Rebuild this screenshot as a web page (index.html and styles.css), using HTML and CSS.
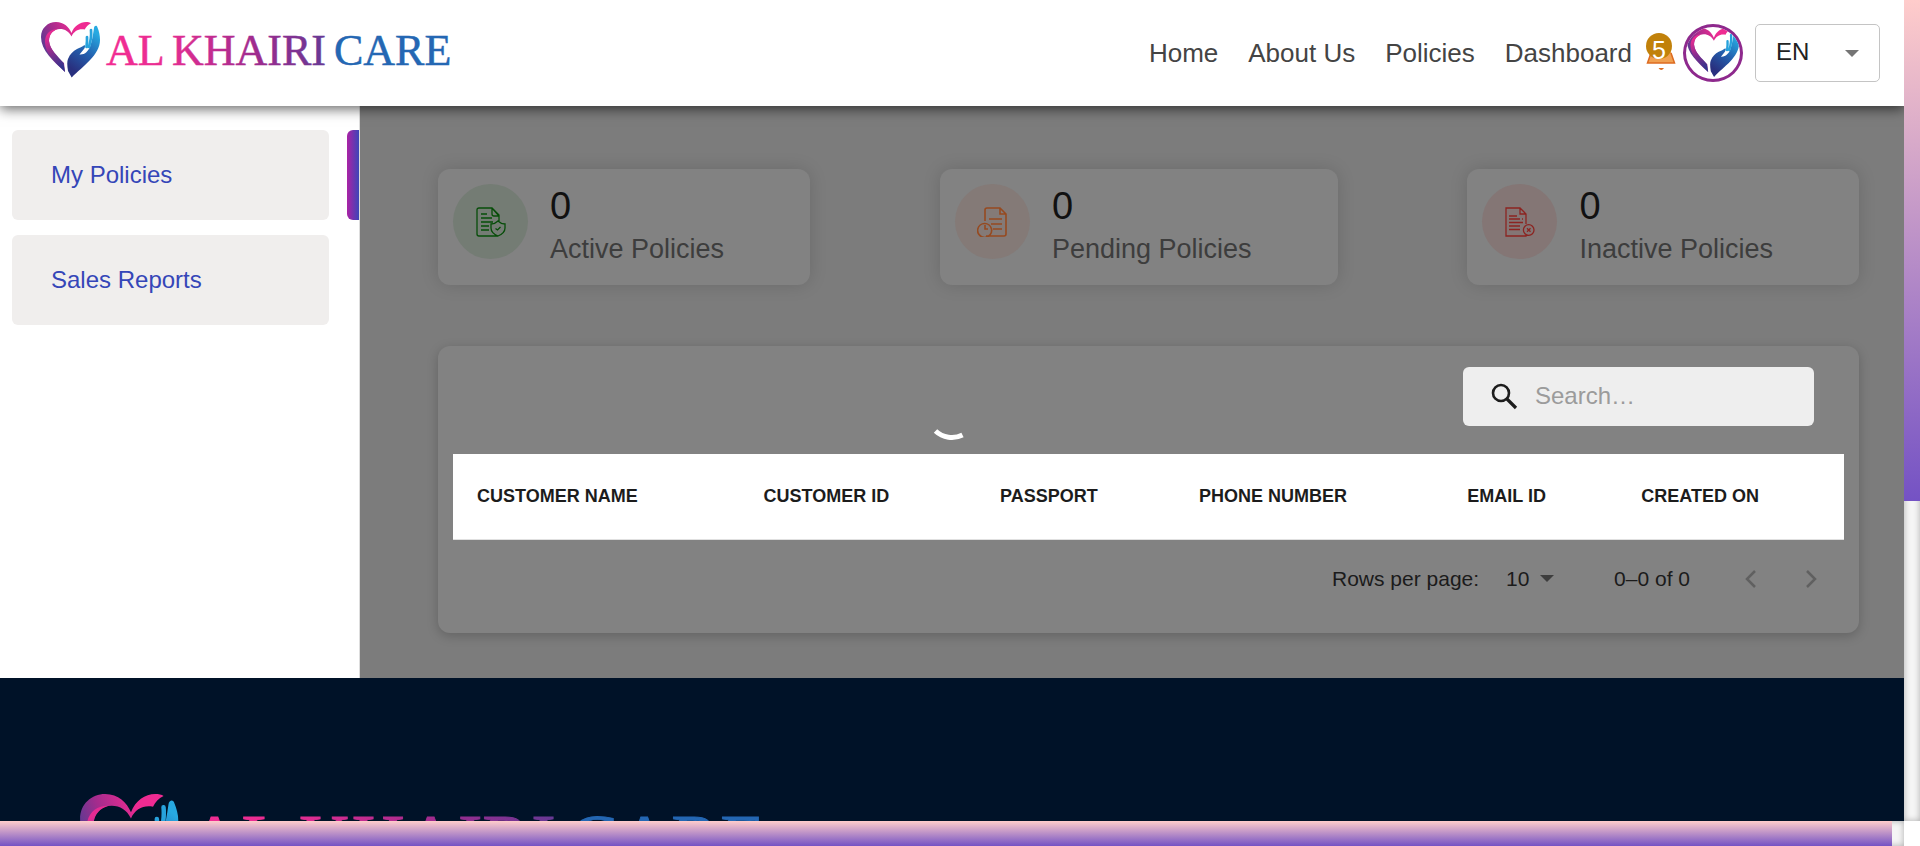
FILE: index.html
```html
<!DOCTYPE html>
<html lang="en">
<head>
<meta charset="utf-8">
<title>Al Khairi Care</title>
<link rel="stylesheet" href="styles.css">
</head>
<body>
<svg class="defs" width="0" height="0" aria-hidden="true">
  <defs>
    <linearGradient id="lobe" gradientUnits="userSpaceOnUse" x1="0" y1="20" x2="34" y2="6">
      <stop offset="0" stop-color="#5b3a92"/><stop offset=".4" stop-color="#a32c8d"/><stop offset="1" stop-color="#ef2b92"/>
    </linearGradient>
    <linearGradient id="limb" gradientUnits="userSpaceOnUse" x1="6" y1="14" x2="23" y2="46">
      <stop offset="0" stop-color="#e52b92"/><stop offset=".45" stop-color="#8b2c8e"/><stop offset="1" stop-color="#2b358c"/>
    </linearGradient>
    <linearGradient id="hand" gradientUnits="userSpaceOnUse" x1="56" y1="12" x2="30" y2="46">
      <stop offset="0" stop-color="#27a9e1"/><stop offset=".5" stop-color="#2360ae"/><stop offset="1" stop-color="#29307f"/>
    </linearGradient>
    <linearGradient id="word" gradientUnits="userSpaceOnUse" x1="65" y1="0" x2="300" y2="0">
      <stop offset="0" stop-color="#f22c92"/><stop offset=".25" stop-color="#e92d92"/><stop offset=".65" stop-color="#9c2b8e"/><stop offset="1" stop-color="#5a3c96"/>
    </linearGradient>
    <symbol id="heart" viewBox="0 0 59 56">
      <path fill="url(#lobe)" d="M24 50C12 39 0 28 0 15C0 6 7 0 15 0C23 0 28 5 30.500 11C33 4 39 0 45 0C47 0 49 .3 50 1.200C47 2.500 45 5 43.700 7.600C38 6.500 33 9 30.500 14.600C28 9.500 24 7 19 7C12 7 8 12 8 19C9 28 16 35 23 41Z"/>
      <path fill="url(#limb)" d="M24 50C14 40 4 31 4 20C4 12 9 7 17 7C11 9 8 13 8 19C9 28 17 34 22.500 41Z"/>
      <path fill="url(#hand)" d="M30.700 55.500L27 49C26 43 26 39 27 37C29 32 32 29 36 27C39 25.500 41 25 43.500 23C44.500 24 44 25.500 43 27L38.500 32.500C44 33 47 29 49 25C51 19 52 13 53 6C53.300 3.500 56 3 56.500 5.500C58 9 59 13 59 18C59 33 42 44 30.700 55.500Z"/>
      <path fill="none" stroke="#27a2dc" stroke-width="2.700" stroke-linecap="round" d="M46 15C46.200 18 46 21 45.500 25M50 8C50.500 13 50 18 48 25"/>
    </symbol>
    <symbol id="brand" viewBox="0 0 412 56">
      <use href="#heart" width="59" height="56"/>
      <text class="wordmark" y="43"><tspan x="65" fill="url(#word)" stroke="url(#word)">AL</tspan><tspan x="131" fill="url(#word)" stroke="url(#word)">KHAIRI</tspan><tspan x="293" fill="#2467b3" stroke="#2467b3">CARE</tspan></text>
    </symbol>
  </defs>
</svg>

<div class="window">
  <div class="page">
    <header class="topbar">
      <a class="brand-link" href="#" aria-label="Al Khairi Care"><svg class="brand" viewBox="0 0 412 56"><use href="#brand"/></svg></a>
      <nav class="nav">
        <a href="#">Home</a><a href="#">About Us</a><a href="#">Policies</a><a href="#">Dashboard</a>
      </nav>
      <button class="bell" aria-label="Notifications">
        <svg viewBox="0 0 30 40"><path d="M6 16h18l4.500 14h-27Z" fill="#f0a050"/><path d="M5 20L1.500 30h27L25 20" fill="none" stroke="#dd6b20" stroke-width="1.500"/><path d="M12.500 35h5.500q-2.700 4-5.500 0Z" fill="#dd6b20"/></svg>
        <span class="badge">5</span>
      </button>
      <button class="avatar" aria-label="Account"><svg viewBox="0 0 59 56"><use href="#heart"/></svg></button>
      <div class="language">
        <select aria-label="Language"><option>EN</option></select>
        <svg class="caret" viewBox="0 0 14 7"><path d="M0 0h14L7 7Z" fill="currentColor"/></svg>
      </div>
    </header>

    <div class="body">
      <aside class="sidebar">
        <div class="side-row"><a href="#">My Policies</a><span class="marker"></span></div>
        <div class="side-row"><a href="#">Sales Reports</a></div>
      </aside>
      <main class="main">
        <section class="stats">
          <article class="stat">
            <div class="disc green"><svg viewBox="0 0 30 30"><path d="M23 14V8L16 1H3Q1 1 1 3V27Q1 29 3 29H22M16 1V7Q16 9 18 9H23M16 1l7 8M5 7H11M5 11H16M5 15H17M5 19H13M5 23H13M22 14Q25 17 29 17V21Q29 26 22 29Q15 26 15 21V17Q19 17 22 14ZM19.500 21.500L21.500 23L24.500 20"/></svg></div>
            <div><p class="count">0</p><p class="label">Active Policies</p></div>
          </article>
          <article class="stat">
            <div class="disc orange"><svg viewBox="0 0 30 30"><path d="M8 14V3Q8 1 10 1H23L29 7V27Q29 29 27 29H9M23 1V7H29M12 12H25M14 17H25M16 22H25M14.500 22A7 7 0 1 1 .8 22A7 7 0 0 1 14.500 22M8 18V22H11"/></svg></div>
            <div><p class="count">0</p><p class="label">Pending Policies</p></div>
          </article>
          <article class="stat">
            <div class="disc red"><svg viewBox="0 0 30 30"><path d="M21 17V7L15 1H1V29H21V28M15 1V7H21M4 9H12M4 12H15M17 12H18M4 15.500H18M4 19H15M4 22.500H15M29 23A5.300 5.300 0 1 1 18.400 23A5.300 5.300 0 0 1 29 23M22 21.200L25.500 24.800M25.500 21.200L22 24.800"/></svg></div>
            <div><p class="count">0</p><p class="label">Inactive Policies</p></div>
          </article>
        </section>
        <section class="panel">
          <label class="search">
            <svg viewBox="0 0 27 27" aria-hidden="true"><circle cx="10" cy="10" r="8" fill="none" stroke="#1c1c1c" stroke-width="2.600"/><path d="M16 16L25 25" stroke="#1c1c1c" stroke-width="3.200"/></svg>
            <input type="text" placeholder="Search…" aria-label="Search">
          </label>
          <table>
            <thead><tr><th class="c-name">CUSTOMER NAME</th><th class="c-id">CUSTOMER ID</th><th class="c-pass">PASSPORT</th><th class="c-phone">PHONE NUMBER</th><th class="c-mail">EMAIL ID</th><th>CREATED ON</th></tr></thead>
          </table>
          <div class="pager">
            <label for="rows">Rows per page:</label>
            <div class="rows">
              <select id="rows"><option>10</option></select>
              <svg class="caret" viewBox="0 0 14 7"><path d="M0 0h14L7 7Z" fill="currentColor"/></svg>
            </div>
            <span class="range">0–0 of 0</span>
            <button disabled aria-label="Previous page"><svg viewBox="0 0 12 18"><path d="M10 1L2 9l8 8"/></svg></button>
            <button disabled aria-label="Next page"><svg viewBox="0 0 12 18"><path d="M2 1l8 8l-8 8"/></svg></button>
          </div>
        </section>
      </main>
    </div>

    <footer class="footer"><svg class="brand" viewBox="0 0 412 56"><use href="#brand"/></svg></footer>
    <div class="loading"><svg viewBox="0 0 60 60"><path d="M13.500 50A24 24 0 0 0 40.500 54" fill="none" stroke="#fff" stroke-width="5"/></svg></div>
  </div>
  <div class="track vertical"><div class="thumb"></div></div>
  <div class="track horizontal"><div class="thumb"></div></div>
</div>
</body>
</html>
```

FILE: styles.css
```css
* { box-sizing: border-box; }
body { margin: 0; font-family: "Liberation Sans", Arial, sans-serif; background: #fff; }
p { margin: 0; }
a { text-decoration: none; color: inherit; }
button { border: 0; padding: 0; background: none; font: inherit; }
select, input { font: inherit; color: inherit; border: 0; background: none; outline: 0; }
select { appearance: none; }
svg { display: block; }
.defs { position: absolute; }

.window { display: grid; grid-template: minmax(0, 1fr) 25px / minmax(0, 1fr) 16px; height: 100vh; }
.page { position: relative; overflow: hidden; }

.topbar { position: relative; z-index: 1; display: flex; align-items: center; height: 106px; padding: 0 24px 0 41px; background: #fff; box-shadow: 0 3px 12px rgba(0, 0, 0, .6); }
.brand-link { margin-right: auto; padding-bottom: 7px; }
.brand { width: 412px; }
.wordmark { font: 44px "Liberation Serif", "Times New Roman", serif; stroke-width: .5px; }
.nav { display: flex; gap: 30px; font-size: 26px; color: #444; }
.bell { position: relative; width: 30px; margin-left: 14px; }
.bell svg { width: 30px; height: 40px; }
.badge { position: absolute; top: 0; left: 0; width: 26px; height: 26px; border-radius: 50%; background: #c1810a; color: #fff; font-size: 25px; line-height: 34px; text-align: center; }
.avatar { display: grid; place-items: center; width: 60px; height: 58px; margin: 0 12px 0 7px; border: 3px solid #8e298d; border-radius: 50%; overflow: hidden; }
.avatar svg { width: 52px; }
.language { display: grid; align-items: center; width: 125px; height: 58px; border: 1px solid #c4c4c4; border-radius: 5px; font-size: 24px; color: #222; }
.language select, .language .caret { grid-area: 1 / 1; }
.language select { width: 100%; height: 100%; padding: 0 20px 3px; }
.caret { width: 14px; color: #757575; pointer-events: none; }
.language .caret { justify-self: end; margin-right: 20px; }

.body { display: grid; grid-template-columns: 360px minmax(0, 1fr); }
.sidebar { display: flex; flex-direction: column; gap: 15px; padding: 24px 0 24px 12px; border-right: 1px solid #ddd; background: #fff; }
.side-row { display: grid; grid-template-columns: 1fr 12px; gap: 18px; height: 90px; font-size: 24px; color: #3546b8; }
.side-row a { display: flex; align-items: center; padding-left: 39px; border-radius: 6px; background: #f0eeed; }
.marker { border-radius: 6px 0 0 6px; background: linear-gradient(90deg, #ab22a5, #3d45b8); }

.main { padding: 63px 45px 45px 78px; background: #7c7c7c; }
.stats { display: flex; justify-content: space-between; margin-bottom: 61px; }
.stat { display: flex; gap: 22px; padding: 15px 86px 15px 15px; border-radius: 12px; background: #828282; box-shadow: 0 0 18px rgba(0, 0, 0, .14); }
.disc { display: grid; place-items: center; width: 75px; height: 75px; border-radius: 50%; }
.disc svg { width: 30px; fill: none; stroke: currentColor; stroke-width: 1.3; }
.green { background: #747c74; color: #064d08; }
.orange { background: #847a77; color: #964a20; }
.orange svg { stroke-width: 1.6; }
.red { background: #847675; color: #8c2421; }
.count { font-size: 38px; line-height: 45px; color: #111; }
.label { font-size: 27px; line-height: 41px; color: #3d3d3d; }

.panel { display: flex; flex-direction: column; padding: 21px 15px 15px; border-radius: 12px; background: #828282; box-shadow: 0 3px 12px rgba(0, 0, 0, .2); }
.search { display: flex; align-items: center; align-self: flex-end; gap: 17px; width: 351px; height: 59px; margin: 0 30px 28px 0; padding: 0 28px; border-radius: 6px; background: #eee; font-size: 24px; }
.search svg { width: 27px; flex: none; }
.search input { min-width: 0; width: 100%; padding: 0 0 2px; }
.search input::placeholder { color: #9b9b9b; opacity: 1; }

table { width: 100%; table-layout: fixed; border-collapse: collapse; background: #fff; }
th { height: 85px; padding: 0 24px; border-bottom: 1px solid #e0e0e0; font-size: 18px; text-align: left; white-space: nowrap; color: #1c1c1c; }
.c-name { width: 20.6%; }
.c-id { width: 17%; }
.c-pass { width: 14.3%; }
.c-phone { width: 19.3%; }
.c-mail { width: 12.5%; }

.pager { display: flex; align-items: center; justify-content: flex-end; height: 78px; padding-right: 3px; font-size: 21px; color: #1b1b1b; }
.rows { display: flex; align-items: center; gap: 10px; margin-left: 27px; }
.rows select { width: 24px; padding: 0; }
.rows .caret { color: #3e3e3e; }
.range { margin: 0 31px 0 60px; }
.pager button { display: grid; place-items: center; width: 60px; height: 60px; }
.pager button svg { width: 12px; fill: none; stroke: #606060; stroke-width: 2.5; }

.footer { height: 400px; padding: 116px 80px; background: #001228; }
.footer .brand { width: 688px; }
.loading { position: absolute; inset: 0; display: grid; place-items: center; pointer-events: none; }
.loading svg { width: 60px; }

.track { background: #f5f5f5; box-shadow: inset 0 0 6px rgba(0, 0, 0, .3); }
.thumb { background: linear-gradient(#ffcccb, #7452c4); }
.vertical .thumb { height: 61%; }
.horizontal .thumb { width: calc(100% - 12px); height: 100%; }
```
